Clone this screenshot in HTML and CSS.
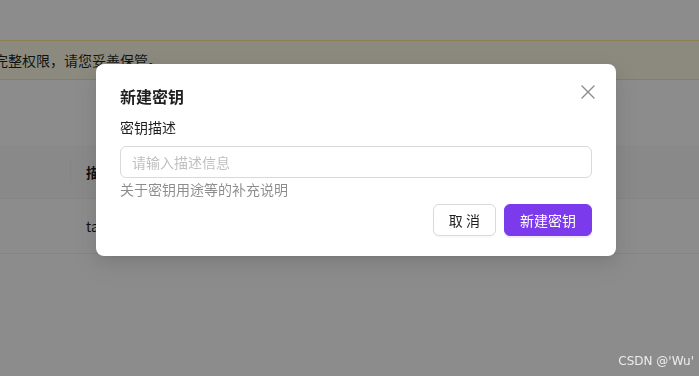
FILE: index.html
```html
<!DOCTYPE html>
<html lang="zh-CN">
<head>
  <meta charset="UTF-8">
  <title>新建密钥</title>
  <link rel="stylesheet" href="styles.css">
</head>
<body>
  <div class="page">
    <div class="alert">
      <span class="alert-text">您的密钥拥有完整权限，请您妥善保管。</span>
    </div>

    <table class="keys">
      <thead>
        <tr>
          <th class="col-name"></th>
          <th class="col-desc">描述</th>
        </tr>
      </thead>
      <tbody>
        <tr>
          <td class="col-name"></td>
          <td class="col-desc">tavily</td>
        </tr>
      </tbody>
    </table>
  </div>

  <div class="mask"></div>

  <div class="modal-wrap">
    <div class="modal">
      <button class="modal-close" aria-label="关闭">
        <svg width="14" height="14" viewBox="0 0 14 14">
          <path d="M1 1 L13 13 M13 1 L1 13" stroke="#8c8c8c" stroke-width="1.4" stroke-linecap="round" fill="none"/>
        </svg>
      </button>
      <div class="modal-title">新建密钥</div>

      <div class="form-item">
        <label class="form-label">密钥描述</label>
        <input class="form-input" type="text" placeholder="请输入描述信息">
        <div class="form-help">关于密钥用途等的补充说明</div>
      </div>

      <div class="modal-footer">
        <button class="btn">取 消</button>
        <button class="btn btn-primary">新建密钥</button>
      </div>
    </div>
  </div>

  <div class="watermark">CSDN @'Wu'</div>
</body>
</html>
```

FILE: styles.css
```css
body {
  margin: 0;
  padding: 0;
  background-color: #ffffff;
  font-family: "Noto Sans CJK SC", "Noto Sans", sans-serif;
  font-size: 14px;
  color: rgba(0, 0, 0, 0.88);
  overflow: hidden;
}

.page {
  padding-top: 40px;
}

.alert {
  background-color: #fffbe6;
  border-top: 1px solid #ffe58f;
  border-bottom: 1px solid #ffe58f;
  padding: 8px 0;
  line-height: 22px;
  white-space: nowrap;
  overflow: hidden;
}

.alert-text {
  display: inline-block;
  margin-left: -90px;
}

.keys {
  width: 100%;
  margin-top: 65px;
  border-collapse: collapse;
}

.keys th {
  position: relative;
  height: 53px;
  padding: 0 16px;
  background-color: #fafafa;
  border-bottom: 1px solid #f0f0f0;
  text-align: left;
  font-weight: 600;
}

.keys th.col-desc::before {
  content: "";
  position: absolute;
  left: 0;
  top: 15px;
  width: 1px;
  height: 23px;
  background-color: #f0f0f0;
}

.keys td {
  height: 54px;
  padding: 0 16px;
  border-bottom: 1px solid #f0f0f0;
}

.keys .col-name {
  width: 38px;
}

.mask {
  position: fixed;
  inset: 0;
  background-color: rgba(0, 0, 0, 0.45);
}

.modal-wrap {
  position: fixed;
  inset: 0;
  padding: 64px 0 0 96px;
}

.modal {
  position: relative;
  width: 520px;
  box-sizing: border-box;
  padding: 20px 24px;
  background-color: #ffffff;
  border-radius: 8px;
  box-shadow: 0 6px 16px rgba(0, 0, 0, 0.08), 0 3px 6px -4px rgba(0, 0, 0, 0.12), 0 9px 28px 8px rgba(0, 0, 0, 0.05);
}

.modal-close {
  position: absolute;
  top: 17px;
  right: 17px;
  width: 22px;
  height: 22px;
  padding: 0;
  border: none;
  background: transparent;
  display: flex;
  align-items: center;
  justify-content: center;
}

.modal-title {
  font-size: 16px;
  font-weight: 600;
  line-height: 24px;
}

.form-item {
  margin-top: 8px;
}

.form-label {
  display: block;
  line-height: 22px;
  margin-bottom: 8px;
}

.form-input {
  display: block;
  width: 100%;
  height: 32px;
  box-sizing: border-box;
  padding: 4px 11px;
  border: 1px solid #d9d9d9;
  border-radius: 6px;
  font-family: inherit;
  font-size: 14px;
  outline: none;
}

.form-input::placeholder {
  color: #bfbfbf;
}

.form-help {
  color: rgba(0, 0, 0, 0.45);
  line-height: 22px;
}

.modal-footer {
  display: flex;
  justify-content: flex-end;
  gap: 8px;
  margin-top: 4px;
}

.btn {
  height: 32px;
  padding: 0 15px;
  border: 1px solid #d9d9d9;
  border-radius: 6px;
  background-color: #ffffff;
  color: rgba(0, 0, 0, 0.88);
  font-family: inherit;
  font-size: 14px;
  box-shadow: 0 2px 0 rgba(0, 0, 0, 0.02);
}

.btn-primary {
  background-color: #7c3aed;
  border-color: #7c3aed;
  color: #ffffff;
  box-shadow: 0 2px 0 rgba(124, 58, 237, 0.1);
}

.watermark {
  position: fixed;
  right: 5px;
  bottom: 8px;
  font-family: "DejaVu Sans", sans-serif;
  font-size: 12px;
  color: #ececec;
}
```
